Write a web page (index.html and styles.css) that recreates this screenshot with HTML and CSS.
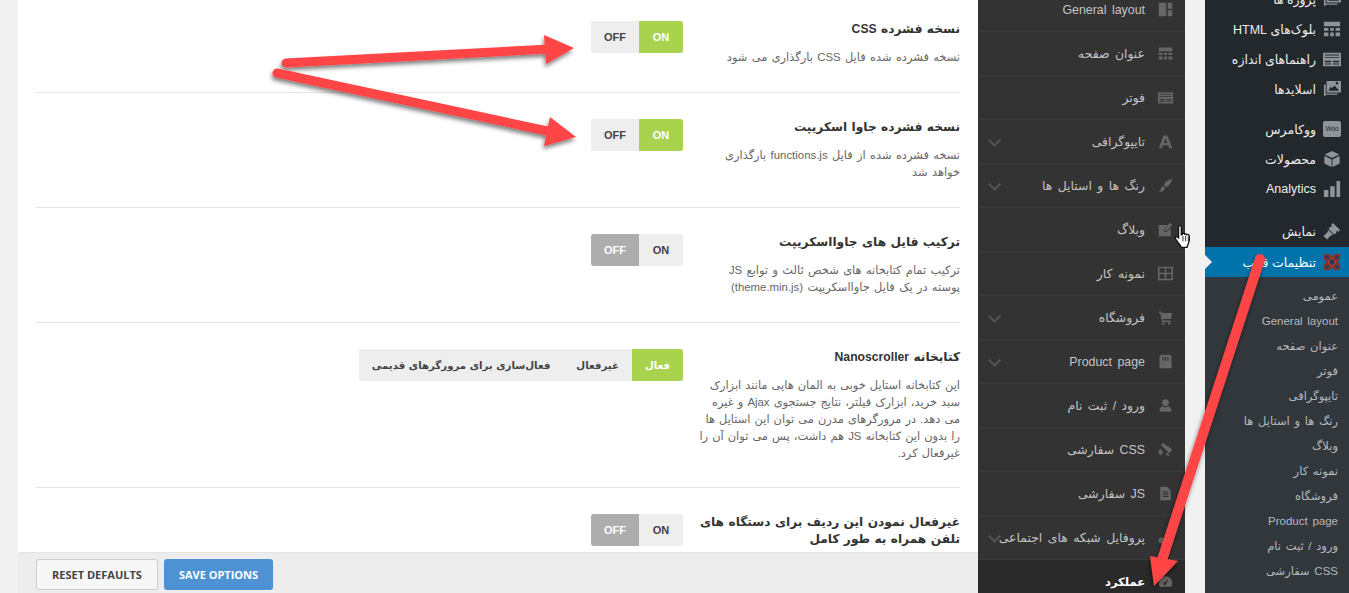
FILE: index.html
```html
<!DOCTYPE html>
<html lang="fa">

<head>
  <meta charset="UTF-8">
  <meta name="viewport" content="width=device-width, initial-scale=1.0">
  <title>تنظیمات قالب</title>
  <link rel="stylesheet" href="styles.css">
</head>

<body>
  <svg class="defs" width="0" height="0">
    <symbol id="i-layout" viewBox="0 0 20 20"><path d="M1 1h10v18H1zM13 1h6v8h-6zM13 11h6v8h-6z" /></symbol>
    <symbol id="i-table" viewBox="0 0 20 20"><path d="M1 2h18v5H1zM1 9h5v3H1zM8 9h4v3H8zM14 9h5v3h-5zM1 14h5v4H1zM8 14h4v4H8zM14 14h5v4h-5z" /></symbol>
    <symbol id="i-footer" viewBox="0 0 20 20"><path fill-rule="evenodd" d="M0 3h20v15H0zM2 5v1h16V5zM2 8v1h16V8zM2 12v1.500h7V12zm9 0v1.500h7V12zM2 15v1h7v-1zm9 0v1h7v-1z" /></symbol>
    <symbol id="i-type" viewBox="0 0 20 20"><path fill-rule="evenodd" d="M7.500 2h5L19 19h-4l-1.300-4H6.300L5 19H1zM10 6l-2.500 6h5z" /></symbol>
    <symbol id="i-brush" viewBox="0 0 20 20"><path d="M18.500 1c.5 3-3 9-7.500 11.500L7.500 9C10 5 15 1.500 18.500 1zM6.500 10.500l3 3C8.500 17 5 18.500 1.500 18.500 4 16.500 3.500 12 6.500 10.500z" /></symbol>
    <symbol id="i-edit" viewBox="0 0 20 20"><path d="M1 4h12L8 9.500V13h3.500L17 7.500V19H1zM15.500 1L19 4l-8 8H9V9.500z" /></symbol>
    <symbol id="i-grid" viewBox="0 0 20 20"><path fill-rule="evenodd" d="M0 1h20v18H0zM2 3v6h7V3zm9 0v6h7V3zM2 11v6h7v-6zm9 0v6h7v-6z" /></symbol>
    <symbol id="i-cart" viewBox="0 0 20 20"><path d="M1 2h3l1 2h14l-2 8H6.500l.4 2H17v2H5.500L3 4H1z" /><circle cx="7" cy="18" r="1.700" /><circle cx="15" cy="18" r="1.700" /></symbol>
    <symbol id="i-bag" viewBox="0 0 20 20"><path fill-rule="evenodd" d="M5 1h10c2 0 3 1.500 3 3v15H2V4c0-1.500 1-3 3-3zM6 4v5h1.500V4zm3.200 0v5h1.600V4zm3.300 0v5H14V4z" /></symbol>
    <symbol id="i-user" viewBox="0 0 20 20"><circle cx="10" cy="6" r="4.500" /><path d="M2 18c0-5 3-6.500 5-7l3 2 3-2c2 .5 5 2 5 7z" /></symbol>
    <symbol id="i-hammer" viewBox="0 0 20 20"><path d="M7 1l6 6-3 3-6-6zM13 5l6 6-4 4-6-6zM3 9l4 4-3 5-4-4zM12 14l3 3-1 2-4-3z" /></symbol>
    <symbol id="i-doc" viewBox="0 0 20 20"><path fill-rule="evenodd" d="M3 1h9l5 5v13H3zM6 7v1.500h8V7zm0 3v1.500h8V10zm0 3v1.500h8V13z" /></symbol>
    <symbol id="i-share" viewBox="0 0 20 20"><circle cx="14" cy="5" r="4" /><circle cx="5" cy="14" r="4" /><circle cx="15" cy="15" r="4" /><path d="M13 5l2 9-9 0z" /></symbol>
    <symbol id="i-gauge" viewBox="0 0 20 20"><path fill-rule="evenodd" d="M10 3a9 9 0 0 1 9 9c0 2-.7 3.600-1.500 5h-15C1.700 15.600 1 14 1 12a9 9 0 0 1 9-9zM14 6l-5 5a2 2 0 1 0 2 2z" /></symbol>
    <symbol id="i-slides" viewBox="0 0 20 20"><path fill-rule="evenodd" d="M4 1h16v13H4zM14 3.500a1.500 1.500 0 1 0 3 0 1.500 1.500 0 1 0-3 0zM6 12h12L13 6l-3 3-1.500-1.500zM1 5h2v10h13v1.500H3v1H1z" /></symbol>
    <symbol id="i-box" viewBox="0 0 20 20"><path d="M10 1l8 4-8 4-8-4zM1.500 6.500l8 4V19l-8-4zM18.500 6.500V15l-8 4v-8.500z" /></symbol>
    <symbol id="i-bars" viewBox="0 0 20 20"><path d="M1 11h5v8H1zM8 7h5v12H8zM15 1h4v18h-4z" /></symbol>
    <symbol id="i-paint" viewBox="0 0 20 20"><path d="M11 1l8 8-2 2-1.500-1.500L14 13l-2 .5-5.500-5.500.5-2 3.500-1.500L9 3zM6 9l5 5-3 1.500-3.500 4L.5 15.500l4-3.500z" /></symbol>
  </svg>

  <div class="page">
    <main class="panel">
      <div class="settings">

        <section class="row">
          <div class="label">
            <h4>نسخه فشرده CSS</h4>
            <p>نسخه فشرده شده فایل CSS بارگذاری می شود</p>
          </div>
          <div class="toggle">
            <span class="on">ON</span>
            <span class="off">OFF</span>
          </div>
        </section>

        <section class="row">
          <div class="label">
            <h4>نسخه فشرده جاوا اسکریپت</h4>
            <p>نسخه فشرده شده از فایل functions.js بارگذاری خواهد شد</p>
          </div>
          <div class="toggle">
            <span class="on">ON</span>
            <span class="off">OFF</span>
          </div>
        </section>

        <section class="row">
          <div class="label">
            <h4>ترکیب فایل های جاوااسکریپت</h4>
            <p>ترکیب تمام کتابخانه های شخص ثالث و توابع JS<br>پوسته در یک فایل جاوااسکریپت (theme.min.js)</p>
          </div>
          <div class="toggle">
            <span>ON</span>
            <span class="off-active">OFF</span>
          </div>
        </section>

        <section class="row tall">
          <div class="label">
            <h4>کتابخانه Nanoscroller</h4>
            <p>این کتابخانه استایل خوبی به المان هایی مانند ابزارک سبد خرید، ابزارک فیلتر، نتایج جستجوی Ajax و غیره<br>می دهد. در مرورگرهای مدرن می توان این استایل ها را بدون این کتابخانه JS هم داشت، پس می توان آن را غیرفعال کرد.</p>
          </div>
          <div class="toggle wide">
            <span class="on">فعال</span>
            <span>غیرفعال</span>
            <span>فعال‌سازی برای مرورگرهای قدیمی</span>
          </div>
        </section>

        <section class="row">
          <div class="label">
            <h4>غیرفعال نمودن این ردیف برای دستگاه های تلفن همراه به طور کامل</h4>
          </div>
          <div class="toggle">
            <span>ON</span>
            <span class="off-active">OFF</span>
          </div>
        </section>

      </div>
      <footer class="actions">
        <button class="btn reset">RESET DEFAULTS</button>
        <button class="btn save">SAVE OPTIONS</button>
      </footer>
    </main>

    <nav class="options">
      <a><svg><use href="#i-layout" /></svg>General layout</a>
      <a><svg><use href="#i-table" /></svg>عنوان صفحه</a>
      <a><svg><use href="#i-footer" /></svg>فوتر</a>
      <a class="more"><svg><use href="#i-type" /></svg>تایپوگرافی</a>
      <a class="more"><svg><use href="#i-brush" /></svg>رنگ ها و استایل ها</a>
      <a><svg><use href="#i-edit" /></svg>وبلاگ</a>
      <a><svg><use href="#i-grid" /></svg>نمونه کار</a>
      <a class="more"><svg><use href="#i-cart" /></svg>فروشگاه</a>
      <a class="more"><svg><use href="#i-bag" /></svg>Product page</a>
      <a><svg><use href="#i-user" /></svg>ورود / ثبت نام</a>
      <a><svg><use href="#i-hammer" /></svg>CSS سفارشی</a>
      <a><svg><use href="#i-doc" /></svg>JS سفارشی</a>
      <a class="more"><svg><use href="#i-share" /></svg>پروفایل شبکه های اجتماعی</a>
      <a class="current"><svg><use href="#i-gauge" /></svg>عملکرد</a>
    </nav>

    <aside class="admin">
      <a><svg><use href="#i-slides" /></svg>پروژه ها</a>
      <a><svg><use href="#i-table" /></svg>بلوک‌های HTML</a>
      <a><svg><use href="#i-footer" /></svg>راهنماهای اندازه</a>
      <a><svg><use href="#i-slides" /></svg>اسلایدها</a>
      <div class="sep"></div>
      <a>
        <span class="woo">Woo</span>
        ووکامرس
      </a>
      <a><svg><use href="#i-box" /></svg>محصولات</a>
      <a><svg><use href="#i-bars" /></svg>Analytics</a>
      <div class="sep large"></div>
      <a><svg><use href="#i-paint" /></svg>نمایش</a>
      <a class="active">
        <svg viewBox="0 0 20 20" class="logo">
          <path d="M1 1h6l3 3 3-3h6v6l-3 3 3 3v6h-6l-3-3-3 3H1v-6l3-3-3-3z" fill="#8a2f2a" />
          <path d="M3 3l14 14M17 3L3 17" stroke="#1d3f5c" stroke-width="2.500" fill="none" />
          <circle cx="10" cy="10" r="4" fill="none" stroke="#c0392b" stroke-width="1.500" />
        </svg>
        تنظیمات قالب
      </a>
      <ul class="submenu">
        <li>عمومی</li>
        <li>General layout</li>
        <li>عنوان صفحه</li>
        <li>فوتر</li>
        <li>تایپوگرافی</li>
        <li>رنگ ها و استایل ها</li>
        <li>وبلاگ</li>
        <li>نمونه کار</li>
        <li>فروشگاه</li>
        <li>Product page</li>
        <li>ورود / ثبت نام</li>
        <li>CSS سفارشی</li>
      </ul>
    </aside>
  </div>

  <!-- red arrows drawn over the screenshot -->
  <svg class="arrows" width="1349" height="593" viewBox="0 0 1349 593">
    <defs>
      <filter id="shadow" x="-10%" y="-10%" width="120%" height="130%">
        <feDropShadow dx="-1" dy="3" stdDeviation="2" flood-color="#000" flood-opacity="0.5" />
      </filter>
    </defs>
    <g filter="url(#shadow)" fill="#ff4444" stroke="#ff4444" stroke-linecap="round">
      <path d="M286 63L550 49" stroke-width="9" fill="none" />
      <path d="M544 35L574 48L546 64z" stroke="none" />
      <path d="M277 73L552 132" stroke-width="9" fill="none" />
      <path d="M550 117L576 137L544 146z" stroke="none" />
      <path d="M1260 259L1162 560" stroke-width="10" fill="none" />
      <path d="M1150 556L1178 561L1154 586z" stroke="none" />
    </g>
  </svg>

  <svg class="cursor" width="20" height="26" viewBox="0 0 18 24">
    <path d="M5 1.500c1 0 1.500.7 1.500 1.500v7l1-.3V9c.8-.6 1.800-.4 2 .4.800-.5 1.700-.3 2 .5.800-.4 2-.2 2.300.8.300 1.500.2 5-.8 7.300-.5 1.500-1 2.500-1.200 3.500H6.500c-.5-1.500-1.500-2.700-3-4.500L1.300 14c-.8-1-.3-2.200 1-2.200.7 0 1.200.5 1.700 1V3c0-.8.300-1.500 1-1.500z" fill="#fff" stroke="#111" stroke-width="1.200" />
    <path d="M8 11v5M10.500 11v5M13 11.500V16" stroke="#111" stroke-width="0.800" />
  </svg>
</body>

</html>
```

FILE: styles.css
```css
* {
  box-sizing: border-box;
  margin: 0;
  padding: 0;
}

html,
body {
  height: 100%;
  overflow: hidden;
}

body {
  position: relative;
  background: #f1f1f1;
  font-family: "Liberation Sans", "DejaVu Sans", sans-serif;
}

.defs {
  position: absolute;
}

.page {
  display: flex;
  height: 593px;
  padding-left: 18px;
}

/* settings panel */
.panel {
  width: 960px;
  display: flex;
  flex-direction: column;
  background: #fff;
}

.settings {
  flex: 1;
  overflow: hidden;
  padding: 0 18px;
  direction: rtl;
}

.row {
  display: flex;
  align-items: flex-start;
  gap: 11px;
  padding: 26px 0;
  border-bottom: 1px solid #e5e5e5;
}

.row:first-child {
  margin-top: -5px;
}

.row.tall {
  padding-bottom: 25px;
}

.row.tall p {
  word-spacing: 0.900px;
}

.label {
  flex: 0 0 266px;
}

.label h4 {
  font-size: 12.200px;
  line-height: 17px;
  font-weight: bold;
  word-spacing: 1px;
  color: #333;
}

.label p {
  margin-top: 11px;
  font-size: 11.400px;
  line-height: 17px;
  word-spacing: 1.200px;
  color: #666;
}

.toggle {
  display: flex;
  height: 32px;
  border-radius: 3px;
  overflow: hidden;
  background: #eee;
  font-size: 11px;
  font-weight: bold;
  color: #444;
}

.toggle span {
  display: flex;
  align-items: center;
  justify-content: center;
  width: 44px;
}

.toggle .off,
.toggle .off-active {
  width: 48px;
}

.toggle .on {
  background: #a9d34f;
  color: #fff;
}

.toggle .off-active {
  background: #adadad;
  color: #fff;
}

.toggle.wide span {
  width: auto;
  padding: 0 13px;
  font-family: "DejaVu Sans", sans-serif;
  font-size: 10.200px;
}

.actions {
  display: flex;
  gap: 6px;
  height: 41px;
  padding: 6px 18px 0;
  background: #ededed;
  border-top: 1px solid #e5e5e5;
}

.btn {
  height: 31px;
  border-radius: 3px;
  font-family: "Open Sans", sans-serif;
  font-size: 11px;
  font-weight: bold;
}

.reset {
  width: 122px;
  background: #f7f7f7;
  border: 1px solid #ccc;
  color: #444;
}

.save {
  width: 109px;
  background: #4e92d4;
  border: 0;
  color: #fff;
}

/* options tabs */
.options {
  width: 207px;
  height: 593px;
  overflow: hidden;
  background: #333;
  direction: rtl;
}

.options a {
  position: relative;
  display: flex;
  align-items: center;
  gap: 13px;
  height: 44px;
  padding-right: 12px;
  border-bottom: 1px solid #3d3d3d;
  font-size: 12.400px;
  word-spacing: 2px;
  color: #c4c4c4;
  white-space: nowrap;
}

.options a:first-child {
  margin-top: -12px;
}

.options svg {
  flex: 0 0 15px;
  width: 15px;
  height: 15px;
  fill: #666;
}

.options .more::after {
  content: "";
  position: absolute;
  left: 12px;
  top: 16px;
  width: 7px;
  height: 7px;
  border-right: 2px solid #555;
  border-bottom: 2px solid #555;
  transform: rotate(45deg);
}

.options .current {
  background: #2a2a2a;
  color: #fff;
  font-size: 11.500px;
  font-weight: bold;
}

/* wordpress menu */
.admin {
  width: 144px;
  height: 593px;
  margin-left: 20px;
  overflow: hidden;
  background: #23282d;
  direction: rtl;
}

.admin > a {
  position: relative;
  display: flex;
  align-items: center;
  gap: 7px;
  height: 30px;
  padding-right: 8px;
  padding-bottom: 2px;
  font-size: 12.500px;
  color: #eee;
  white-space: nowrap;
}

.admin > a:first-child {
  margin-top: -15px;
}

.admin svg {
  flex: 0 0 18px;
  width: 18px;
  height: 18px;
  fill: #8f9499;
}

.woo {
  flex: 0 0 18px;
  height: 16px;
  border-radius: 2px;
  background: #8f9499;
  color: #23282d;
  font-size: 6.500px;
  line-height: 16px;
  text-align: center;
}

.sep {
  height: 10px;
}

.sep.large {
  height: 12px;
}

.admin .active {
  padding-bottom: 0;
  background: #0073aa;
  color: #fff;
}

.admin .active::after {
  content: "";
  position: absolute;
  left: 0;
  top: 8px;
  border: 7px solid transparent;
  border-left-color: #f1f1f1;
}

.submenu {
  list-style: none;
  padding: 7px 11px 0 0;
  background: #32373c;
  height: 316px;
}

.submenu li {
  height: 25px;
  line-height: 25px;
  font-size: 11.500px;
  word-spacing: 1.500px;
  color: #b4b9be;
  white-space: nowrap;
}

/* overlays */
.arrows {
  position: absolute;
  left: 0;
  top: 0;
  pointer-events: none;
}

.cursor {
  position: absolute;
  left: 1174px;
  top: 224px;
}
```
